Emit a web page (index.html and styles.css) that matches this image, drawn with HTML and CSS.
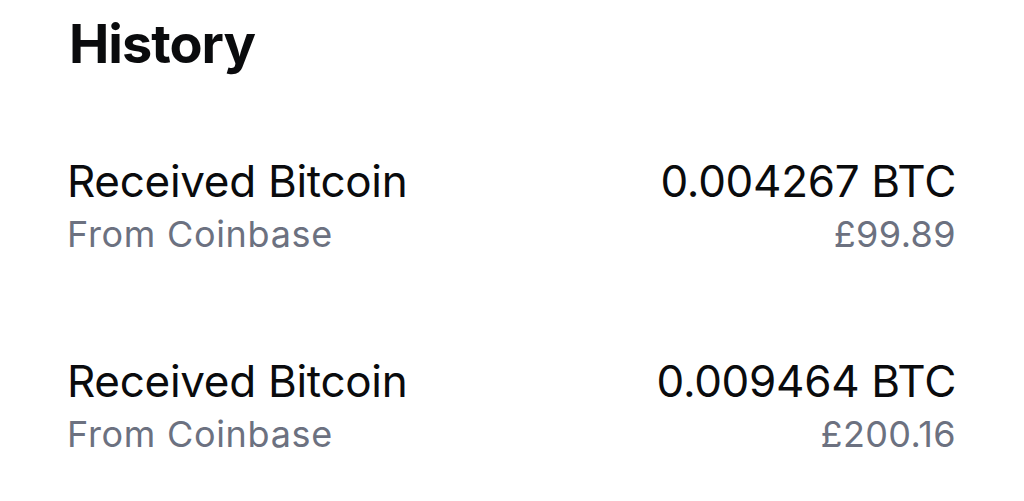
FILE: index.html
```html
<!DOCTYPE html>
<html>
<head>
<meta charset="utf-8">
<link rel="stylesheet" href="styles.css">
</head>
<body>
<main class="screen">
  <h1 class="title">History</h1>
  <ul class="history">
    <li class="tx">
      <div class="tx-main">
        <div class="tx-label">Received Bitcoin</div>
        <div class="tx-sub">From Coinbase</div>
      </div>
      <div class="tx-amounts">
        <div class="tx-crypto">0.004267 BTC</div>
        <div class="tx-fiat">£99.89</div>
      </div>
    </li>
    <li class="tx">
      <div class="tx-main">
        <div class="tx-label">Received Bitcoin</div>
        <div class="tx-sub">From Coinbase</div>
      </div>
      <div class="tx-amounts">
        <div class="tx-crypto">0.009464 BTC</div>
        <div class="tx-fiat">£200.16</div>
      </div>
    </li>
  </ul>
</main>
</body>
</html>
```
FILE: styles.css
```css
html, body {
  margin: 0;
  padding: 0;
  background: #ffffff;
}
body {
  font-family: Inter, "Noto Sans", sans-serif;
  color: #0a0b0d;
}
.screen {
  padding: 10px 68px 0 69px;
}
.title {
  margin: 0;
  font-size: 54px;
  line-height: 68px;
  font-weight: 700;
  letter-spacing: -1px;
}
.history {
  list-style: none;
  margin: 77px 0 0 -2px;
  padding: 0;
  display: flex;
  flex-direction: column;
  gap: 99px;
}
.tx {
  display: flex;
  justify-content: space-between;
  align-items: flex-start;
}
.tx-amounts {
  text-align: right;
}
.tx-label, .tx-crypto {
  font-size: 44px;
  line-height: 52px;
  font-weight: 400;
  letter-spacing: -0.3px;
}
.tx-sub, .tx-fiat {
  margin-top: 5px;
  font-size: 36px;
  line-height: 44px;
  letter-spacing: 0.7px;
  color: #6c7180;
}
.tx-fiat {
  letter-spacing: 0.4px;
}
```
